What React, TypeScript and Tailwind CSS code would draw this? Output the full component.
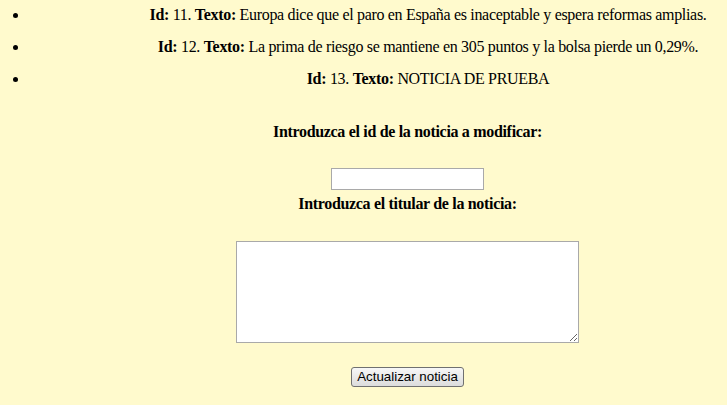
import React from "react";

const items = [
  { id: 11, text: "Europa dice que el paro en España es inaceptable y espera reformas amplias." },
  { id: 12, text: "La prima de riesgo se mantiene en 305 puntos y la bolsa pierde un 0,29%." },
  { id: 13, text: "NOTICIA DE PRUEBA" },
];

export default function App() {
  return (
    <div
      className="min-h-screen w-full bg-[#FFFACD] text-black text-[16px] tracking-[-0.32px]"
      style={{ fontFamily: '"Liberation Serif", "Times New Roman", serif' }}
    >
      <ul className="pt-[6px] flex flex-col gap-[14px]">
        {items.map((it) => (
          <li key={it.id} className="flex flex-row leading-[18px]">
            <div className="w-[129px] h-[18px] flex items-center shrink-0">
              <span className="ml-[13px] block w-[5px] h-[5px] rounded-full bg-black" />
            </div>
            <div className="flex-1 text-center whitespace-nowrap">
              <b>Id:</b> {it.id}. <b>Texto:</b> {it.text}
            </div>
          </li>
        ))}
      </ul>
      <div className="pl-[88px] flex flex-col items-center">
        <div className="mt-[35px] font-bold leading-[18px]">
          Introduzca el id de la noticia a modificar:
        </div>
        <input
          type="text"
          className="mt-[27px] w-[153px] h-[22px] border border-[#a9a9a9] bg-white outline-none"
        />
        <div className="mt-[5px] font-bold leading-[18px]">
          Introduzca el titular de la noticia:
        </div>
        <textarea className="mt-[28px] w-[343px] h-[102px] border border-[#a9a9a9] bg-white outline-none block" />
        <button
          className="mt-[24px] w-[113px] h-[20px] border border-[#707070] rounded-[3px] bg-gradient-to-b from-[#f7f7f7] to-[#dcdcdc] text-[13.333px] leading-[18px] tracking-normal text-black flex items-center justify-center"
          style={{ fontFamily: '"Liberation Sans", Arial, sans-serif' }}
        >
          Actualizar noticia
        </button>
      </div>
    </div>
  );
}
